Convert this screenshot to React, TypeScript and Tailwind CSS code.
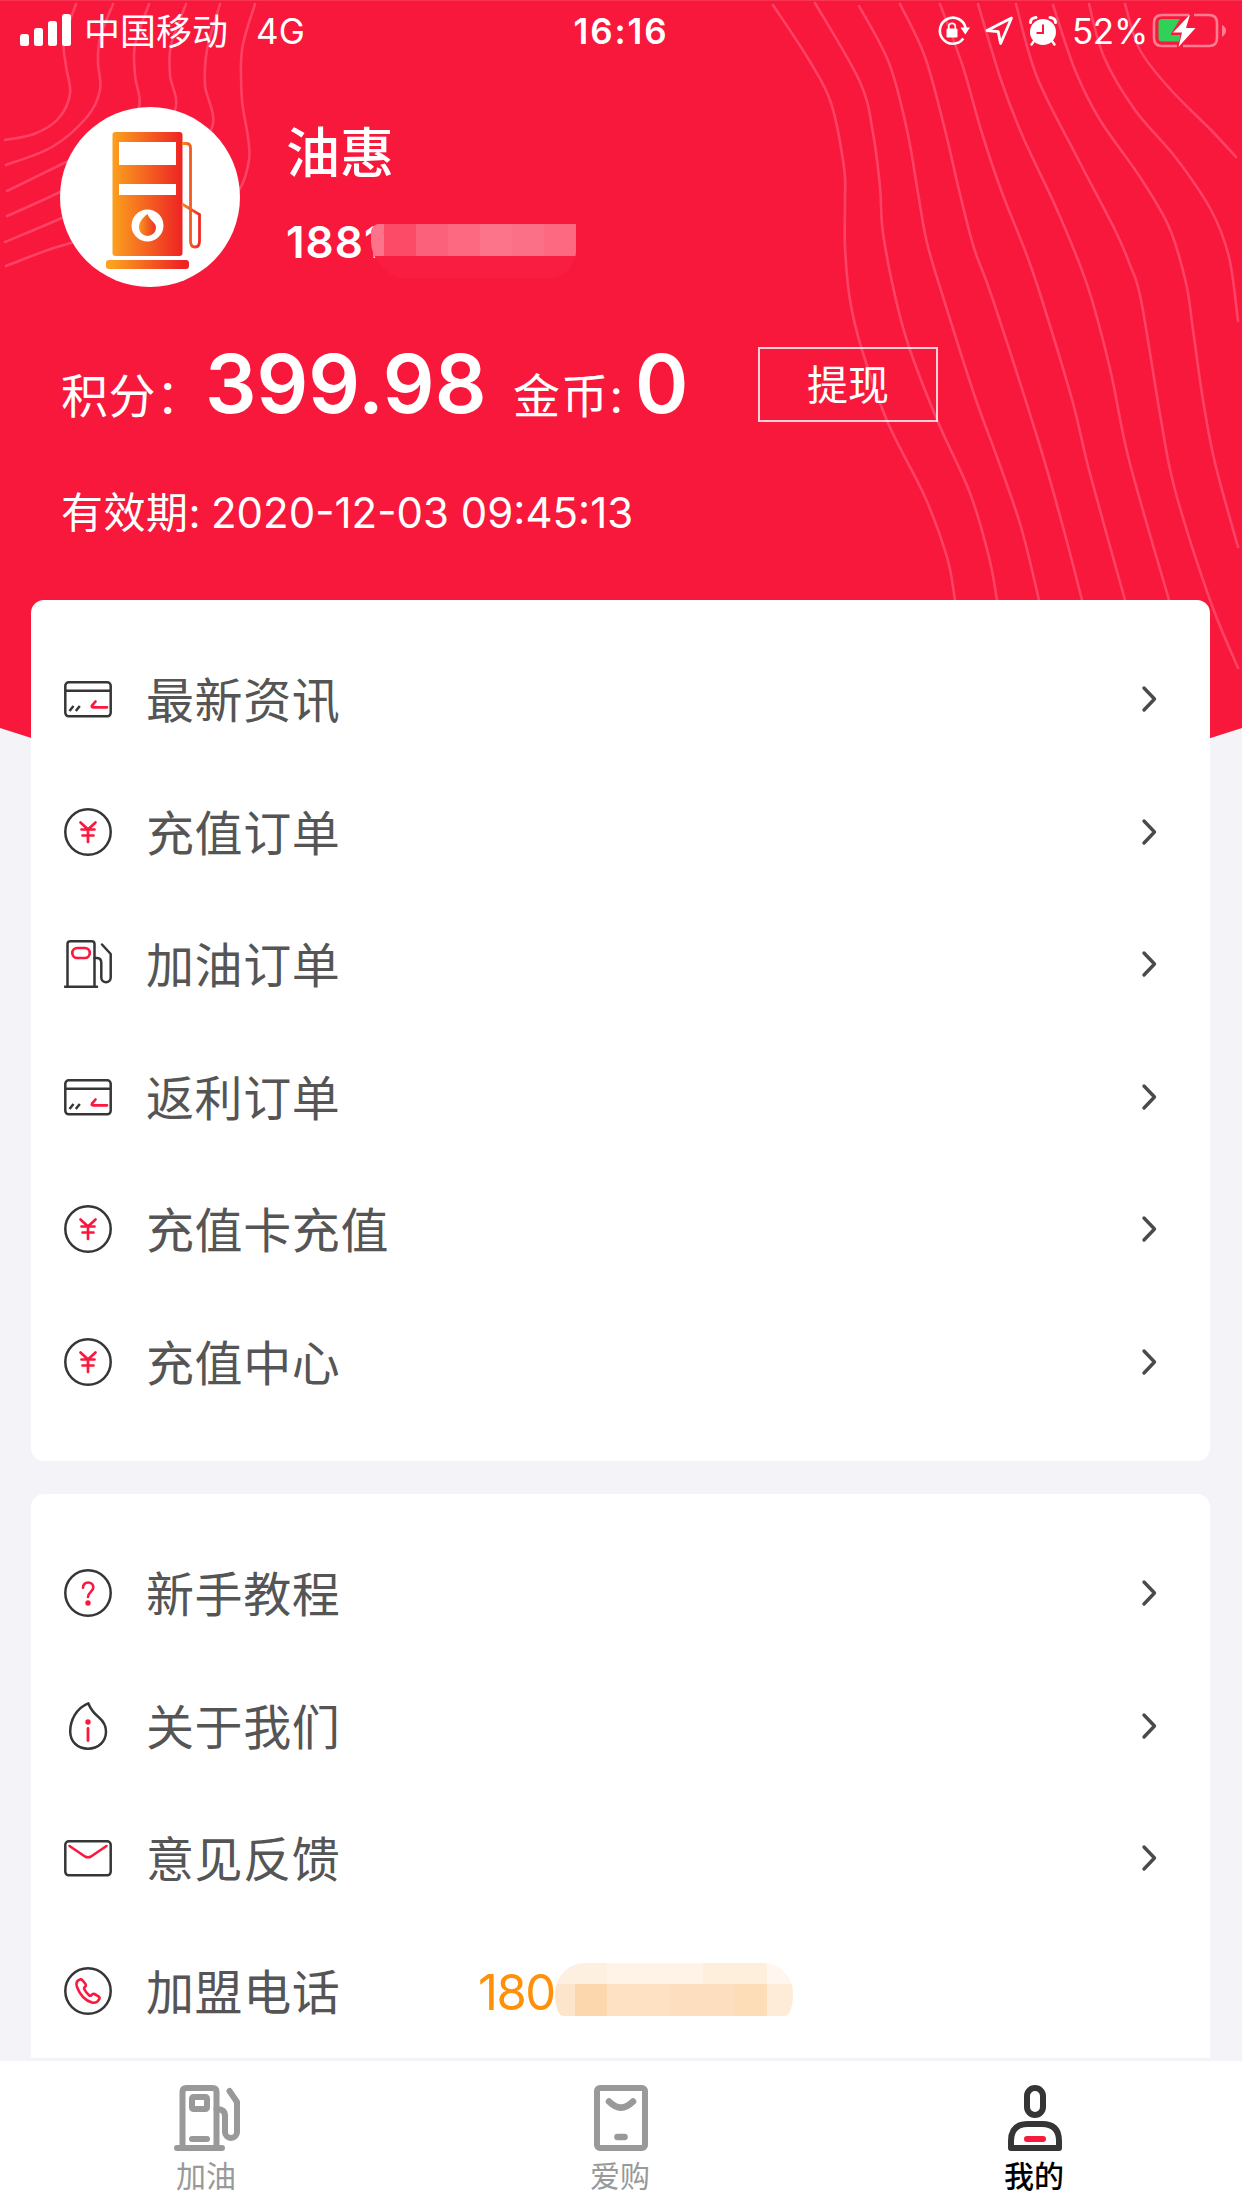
import type { ReactNode } from "react";

type Point = [number, number];

const contours: Point[][] = [
  [[76, 4], [64, 40], [66, 66], [70, 94], [58, 119], [34, 134], [5, 140]],
  [[113, 4], [100, 38], [98, 62], [100, 90], [87, 117], [52, 147], [6, 165]],
  [[149, 4], [135, 45], [135, 75], [138, 110], [105, 142], [60, 165], [7, 191]],
  [[186, 4], [171, 45], [170, 75], [174, 112], [130, 155], [60, 192], [7, 216]],
  [[220, 4], [207, 50], [205, 85], [211, 130], [160, 175], [62, 218], [5, 242]],
  [[255, 4], [242, 50], [242, 100], [249, 160], [225, 205], [150, 232], [71, 243], [6, 266]],
  [[773, 5], [809, 60], [831, 103], [844, 167], [845, 200], [845, 247], [850, 300], [862, 350], [888, 423], [925, 497], [947, 557], [955, 600]],
  [[815, 3], [860, 82], [873, 133], [880, 187], [883, 233], [896, 300], [910, 350], [938, 422], [970, 493], [989, 557], [997, 600]],
  [[859, 6], [889, 63], [907, 130], [918, 193], [927, 243], [944, 300], [975, 397], [997, 457], [1021, 527], [1039, 600]],
  [[900, 4], [925, 57], [945, 130], [959, 190], [974, 248], [993, 300], [1039, 443], [1063, 527], [1082, 600]],
  [[940, 4], [963, 67], [981, 130], [1001, 190], [1026, 253], [1042, 300], [1073, 403], [1089, 470], [1125, 600]],
  [[978, 4], [1001, 80], [1023, 137], [1054, 203], [1078, 260], [1092, 300], [1111, 373], [1129, 460], [1169, 600]],
  [[1016, 4], [1037, 77], [1077, 157], [1115, 230], [1130, 265], [1141, 300], [1161, 420], [1175, 490], [1210, 600], [1238, 668]],
  [[1053, 5], [1075, 70], [1100, 120], [1140, 177], [1169, 227], [1186, 283], [1193, 330], [1203, 400], [1215, 463], [1238, 547]],
  [[1089, 4], [1104, 57], [1135, 110], [1176, 158], [1211, 210], [1229, 257], [1238, 321]],
  [[1125, 4], [1140, 50], [1171, 90], [1211, 130], [1236, 157]],
];

// Catmull-Rom through the points
function smooth(points: Point[]) {
  let d = `M${points[0][0]} ${points[0][1]}`;
  for (let i = 0; i < points.length - 1; i++) {
    const p0 = points[i - 1] ?? points[i];
    const p1 = points[i];
    const p2 = points[i + 1];
    const p3 = points[i + 2] ?? p2;
    d += ` C${p1[0] + (p2[0] - p0[0]) / 6} ${p1[1] + (p2[1] - p0[1]) / 6} ${p2[0] - (p3[0] - p1[0]) / 6} ${p2[1] - (p3[1] - p1[1]) / 6} ${p2[0]} ${p2[1]}`;
  }
  return d;
}

function HeaderBackground() {
  return (
    <svg className="absolute top-0 left-0" width="1242" height="900" viewBox="0 0 1242 900" fill="none">
      <path d="M0 0H1242V728Q930 830 621 830T0 728Z" fill="#f8183b" />
      <path d="M0 .5H1242" stroke="#fb3352" />
      <g stroke="#ff4a6d" strokeWidth="2.6" strokeLinecap="round" opacity="0.85">
        {contours.map((points, i) => (
          <path key={i} d={smooth(points)} />
        ))}
      </g>
    </svg>
  );
}

function StatusBar() {
  return (
    <div className="flex h-[60px] items-center justify-between pt-0.5">
      <div className="flex w-[560px] items-center pl-5">
        <svg width="52" height="34" viewBox="0 0 52 34" fill="#fff">
          <rect x="0" y="20" width="9" height="12" rx="2.5" />
          <rect x="14" y="14" width="9" height="18" rx="2.5" />
          <rect x="28" y="7" width="9" height="25" rx="2.5" />
          <rect x="42" y="0" width="9" height="32" rx="2.5" />
        </svg>
        <span className="mt-0.5 ml-3 text-[36px] leading-none">中国移动</span>
        <span className="ml-7 text-[35px] leading-none">4G</span>
      </div>
      <span className="text-[35px] leading-none font-semibold tracking-[1.9px]">16:16</span>
      <div className="flex w-[560px] items-center justify-end pr-4">
        <svg width="34" height="34" viewBox="0 0 34 34" fill="none">
          <path d="M26.3 24.5A13 13 0 1 1 28.6 14" stroke="#fff" strokeWidth="2.6" />
          <path d="M23.5 13.5h9.5l-4.7 7z" fill="#fff" />
          <rect x="9.5" y="14.5" width="11" height="9" rx="1.2" fill="#fff" />
          <path d="M11.7 15v-2.3a3.3 3.3 0 0 1 6.6 0V15" stroke="#fff" strokeWidth="1.6" />
        </svg>
        <svg className="ml-[14px]" width="29" height="30" viewBox="0 0 29 30" fill="none">
          <path d="M26.5 2L2 14.5L13.2 15.6L15.6 27.5Z" stroke="#fff" strokeWidth="2.8" strokeLinejoin="round" />
        </svg>
        <svg className="ml-[15px]" width="28" height="30" viewBox="0 0 28 30" fill="none">
          <circle cx="14" cy="16" r="13" fill="#fff" />
          <path d="M14 8.5V17H7.5" stroke="#f8183b" strokeWidth="2" />
          <path d="M1.5 6.5Q1.5 2 7 1.5M26.5 6.5Q26.5 2 21 1.5" stroke="#fff" strokeWidth="3" strokeLinecap="round" />
          <path d="M5 25L2.5 28.5M23 25L25.5 28.5" stroke="#fff" strokeWidth="2.4" strokeLinecap="round" />
        </svg>
        <span className="ml-[15px] text-[35px] leading-none tracking-[-0.3px]">52%</span>
        <svg className="ml-1" width="74" height="36" viewBox="0 0 74 36" fill="none">
          <path d="M37 2H10Q2 2 2 10V25Q2 33 10 33H25M42 2H57Q65 2 65 10V25Q65 33 57 33H31" stroke="#fd7e92" strokeWidth="2.6" />
          <path d="M70 12Q74 14 74 17.5T70 24Z" fill="#fd7e92" />
          <path d="M28 6H10Q6.5 6 6.5 9.5V25Q6.5 28.5 10 28.5H27L28.5 22H18.5Z" fill="#30d158" />
          <path d="M38 1.5L21 19.5H30L26.5 34L43.5 15H34Z" fill="#fff" />
        </svg>
      </div>
    </div>
  );
}

function Avatar() {
  return (
    <div className="h-[180px] w-[180px] rounded-full bg-white">
      <svg width="180" height="180" viewBox="0 0 180 180" fill="none">
        <defs>
          <linearGradient id="pump" gradientUnits="userSpaceOnUse" x1="52" y1="0" x2="122" y2="0">
            <stop stopColor="#fba11e" />
            <stop offset="1" stopColor="#ee2424" />
          </linearGradient>
          <linearGradient id="hose" gradientUnits="userSpaceOnUse" x1="122" y1="0" x2="141" y2="0">
            <stop stopColor="#f58a1f" />
            <stop offset="1" stopColor="#ee2424" />
          </linearGradient>
          <linearGradient id="drop" gradientUnits="userSpaceOnUse" x1="79" y1="0" x2="96" y2="0">
            <stop stopColor="#f9971e" />
            <stop offset="1" stopColor="#ee3023" />
          </linearGradient>
        </defs>
        <rect x="52.5" y="25" width="70" height="124" rx="3" fill="url(#pump)" />
        <rect x="46" y="153" width="83" height="9" rx="3" fill="url(#pump)" />
        <rect x="59" y="35" width="57" height="23" fill="#fff" />
        <rect x="59" y="77" width="57" height="11" fill="#fff" />
        <circle cx="87.5" cy="118.5" r="16" fill="#fff" />
        <path d="M87.5 107C82 111 79 116 79 120.5A8.5 8.5 0 0 0 96 120.5C96 115 89 113 87.5 107Z" fill="url(#drop)" />
        <path
          d="M122 36.5H126Q130.5 36.5 130.5 41V134Q130.5 140 135 140T139.5 134V107.5L122 97"
          stroke="url(#hose)"
          strokeWidth="2.8"
        />
      </svg>
    </div>
  );
}

function Profile() {
  return (
    <div className="flex pt-[47px] pl-[60px]">
      <Avatar />
      <div className="ml-[46px] flex flex-col">
        <div className="mt-[17px] text-[54px] leading-[60px] font-medium">油惠</div>
        <div className="mt-[30px] flex h-[60px]">
          <span className="mt-px text-[44px] leading-[54px] font-semibold tracking-[1px] whitespace-nowrap">1881</span>
          <div className="relative mt-[10px] -ml-[13px] flex h-[55px] flex-col overflow-hidden rounded-tl-[8px] rounded-br-[28px] rounded-bl-[38px]">
            <div className="flex h-8">
              <div className="w-[13px] bg-[#fd7389]" />
              <div className="w-8 bg-[#fc4b67]" />
              <div className="w-8 bg-[#fb617a]" />
              <div className="w-8 bg-[#fd6980]" />
              <div className="w-8 bg-[#fc7489]" />
              <div className="w-8 bg-[#fc7087]" />
              <div className="w-8 bg-[#fd6980]" />
            </div>
            <div className="h-[22px] bg-[#f91d41]" />
          </div>
        </div>
      </div>
    </div>
  );
}

function Balance() {
  return (
    <div className="mt-[60px] flex h-[75px] pl-[60px]">
      <div className="flex w-[698px] items-baseline whitespace-nowrap">
        <span className="w-[145px] pl-px text-[47px] leading-[75px] tracking-[0.5px]">积分：</span>
        <span className="w-[307px] text-[81px] leading-[75px] font-semibold">399.98</span>
        <span className="w-[123px] pl-px text-[47px] leading-[75px] tracking-[1.3px]">金币:</span>
        <span className="text-[81px] leading-[75px] font-semibold">0</span>
      </div>
      <div className="flex h-[75px] w-[180px] items-center justify-center border-2 border-white/80 pt-px text-[41px] leading-none">
        提现
      </div>
    </div>
  );
}

const dark = "#363636";
const red = "#fb173d";

function RowIcon({ children }: { children: ReactNode }) {
  return (
    <svg width="48" height="48" viewBox="0 0 48 48" fill="none" stroke={dark} strokeWidth="2.5" strokeLinecap="round" strokeLinejoin="round">
      {children}
    </svg>
  );
}

function CardIcon() {
  return (
    <RowIcon>
      <rect x="1.3" y="7.3" width="45.4" height="34" rx="3.5" />
      <path d="M1 15.7H47M5.5 36L9.5 31M11.8 36L15.8 31" strokeLinecap="butt" />
      <path d="M31.5 26.5L28 30.7Q27.3 32.3 29 32.3H43" stroke={red} strokeWidth="2.7" />
    </RowIcon>
  );
}

function YenIcon() {
  return (
    <RowIcon>
      <circle cx="24" cy="24" r="22.7" />
      <path d="M16.5 14.5L24 21.5L31.5 14.5M24 21.5V34M17.5 21.5H30.5M18.5 27.5H29.5" stroke={red} strokeWidth="2.7" />
    </RowIcon>
  );
}

function PumpIcon() {
  return (
    <RowIcon>
      <path d="M3.5 47V4Q3.5 1.3 6.5 1.3H27.5Q30.5 1.3 30.5 4V47M1 46.7H33" />
      <rect x="8.3" y="8" width="17.5" height="10" rx="5" stroke={red} strokeWidth="2.7" />
      <path d="M30.5 18H33Q37.3 18 37.3 23V37.5A4.7 4.7 0 0 0 46.7 37.5V14L38 4.5" />
    </RowIcon>
  );
}

function HelpIcon() {
  return (
    <RowIcon>
      <circle cx="24" cy="24" r="22.7" />
      <path d="M19 18.8C19 11.5 29.3 12 29.3 18.5C29.3 22.5 24 23.5 24 28" stroke={red} strokeWidth="2.6" />
      <circle cx="24" cy="34" r="2.7" fill={red} stroke="none" />
    </RowIcon>
  );
}

function DropIcon() {
  return (
    <RowIcon>
      <path d="M24.3 1.3C12 6 6.2 19 6.2 29.5C6.2 40 14 46.7 24 46.7S42 40 42 29.5C42 22 38.5 18.5 35 15.5C30 11.5 26.5 7 24.3 1.3Z" />
      <circle cx="24" cy="20" r="2.7" fill={red} stroke="none" />
      <path d="M24 26.5V38.5" stroke={red} strokeWidth="2.8" />
    </RowIcon>
  );
}

function MailIcon() {
  return (
    <RowIcon>
      <rect x="1.3" y="7.3" width="45.4" height="34" rx="3.5" />
      <path d="M5.5 12L21 22.5Q24 24 27 22.5L42.5 12" stroke={red} strokeWidth="2.6" />
    </RowIcon>
  );
}

function PhoneIcon() {
  return (
    <RowIcon>
      <circle cx="24" cy="24" r="22.7" />
      <path
        d="M16 12.5C13 13.5 11.5 16 13 20C16 28 21 33.5 28 35.5C31.5 36.5 34 34.5 35.3 32C35.8 31 35.5 30 34.5 29.3L30.5 27C29.5 26.5 28.5 26.7 27.8 27.8C27 29 26 29.2 24.8 28C22.5 26 21.5 24.5 20.5 22.5C19.8 21.3 20 20.5 21 19.8C22 19 22 18 21.5 17L18.5 13.3C17.8 12.5 17 12.2 16 12.5Z"
        stroke={red}
        strokeWidth="2.6"
      />
    </RowIcon>
  );
}

function Row({ icon, label, children }: { icon: ReactNode; label: string; children?: ReactNode }) {
  return (
    <div className="flex h-[132.5px] items-center pr-[52px] pl-[33px]">
      {icon}
      <span className="mt-1 ml-[34px] w-[332px] text-[48px] leading-none tracking-[0.6px] text-[#555]">{label}</span>
      {children ?? (
        <svg className="ml-auto" width="18" height="28" viewBox="0 0 18 28" fill="none">
          <path d="M4 3L14.5 14L4 25" stroke="#4a4a4a" strokeWidth="3.4" strokeLinecap="round" strokeLinejoin="round" />
        </svg>
      )}
    </div>
  );
}

function HotlineNumber() {
  return (
    <div className="flex h-[54px] items-start text-[#ff9008]">
      <span className="w-[77px] pt-1 text-[49px] leading-none tracking-[-1.5px]">180</span>
      <div className="-mt-px flex h-[53px] flex-col overflow-hidden [border-radius:30px_30px_8px_8px/30px_30px_22px_22px]">
        <div className="flex h-[21px]">
          <div className="w-[52px] bg-[#fef0e0]" />
          <div className="w-24 bg-[#fef3e6]" />
          <div className="w-16 bg-[#feefdd]" />
          <div className="w-[26px] bg-[#fff7ef]" />
        </div>
        <div className="flex h-8">
          <div className="w-5 bg-[#fde5cb]" />
          <div className="w-8 bg-[#fcd7ae]" />
          <div className="w-16 bg-[#fde1c2]" />
          <div className="w-16 bg-[#fddfbf]" />
          <div className="w-8 bg-[#fddcb8]" />
          <div className="w-[26px] bg-[#feecd9]" />
        </div>
      </div>
    </div>
  );
}

function TabItem({ label, active, children }: { label: string; active?: boolean; children: ReactNode }) {
  return (
    <div className={`flex flex-1 flex-col items-center pt-6 ${active ? "font-medium text-black" : "text-[#999]"}`}>
      <svg width="66" height="66" viewBox="0 0 66 66" fill="none" stroke={active ? "#353535" : "#999"} strokeWidth="6" strokeLinecap="round" strokeLinejoin="round">
        {children}
      </svg>
      <span className="mt-[10px] mr-0.5 text-[30px] leading-[30px]">{label}</span>
    </div>
  );
}

export default function App() {
  return (
    <div className="relative flex h-[2208px] w-[1242px] flex-col overflow-hidden bg-[#f3f3f8] font-['Inter','Noto_Sans_CJK_SC',sans-serif]">
      <HeaderBackground />
      <div className="relative flex min-h-0 flex-1 flex-col overflow-hidden">
        <div className="h-[600px] shrink-0 text-white">
          <StatusBar />
          <Profile />
          <Balance />
          <div className="mt-[61px] flex pl-[61px] text-[42px] leading-[60px] whitespace-nowrap">
            <span className="w-[150px] tracking-[0.5px]">有效期:</span>
            <span>2020-12-03 09:45:13</span>
          </div>
        </div>
        <div className="mr-8 ml-[31px] shrink-0 rounded-[13px] bg-white py-[33px]">
          <Row icon={<CardIcon />} label="最新资讯" />
          <Row icon={<YenIcon />} label="充值订单" />
          <Row icon={<PumpIcon />} label="加油订单" />
          <Row icon={<CardIcon />} label="返利订单" />
          <Row icon={<YenIcon />} label="充值卡充值" />
          <Row icon={<YenIcon />} label="充值中心" />
        </div>
        <div className="mt-[33px] mr-8 ml-[31px] shrink-0 rounded-[13px] bg-white py-[33px]">
          <Row icon={<HelpIcon />} label="新手教程" />
          <Row icon={<DropIcon />} label="关于我们" />
          <Row icon={<MailIcon />} label="意见反馈" />
          <Row icon={<PhoneIcon />} label="加盟电话">
            <HotlineNumber />
          </Row>
        </div>
      </div>
      <div className="relative flex h-[150px] shrink-0 border-t-[3px] border-[#f3f3f8] bg-white">
        <TabItem label="加油">
          <path d="M8.5 62V7Q8.5 3 12.5 3H38.5Q42.5 3 42.5 7V62M3 63H48" />
          <rect x="18" y="12" width="15" height="12" rx="1.5" />
          <path d="M18 54H33" />
          <path d="M42.5 24Q51 24 51 31V47A6 6 0 0 0 63 47V17L55.5 6" />
        </TabItem>
        <TabItem label="爱购">
          <rect x="9" y="3" width="48" height="60" rx="3" />
          <path d="M21 16.5Q33 28.5 45 16.5M29.5 52H36.5" strokeWidth="6.6" />
        </TabItem>
        <TabItem label="我的" active>
          <rect x="25" y="3" width="16" height="27" rx="8" />
          <path d="M9 63V56Q9 39 26 39H40Q57 39 57 56V63Z" />
          <path d="M25 54H41" stroke="#f8193e" />
        </TabItem>
      </div>
    </div>
  );
}
